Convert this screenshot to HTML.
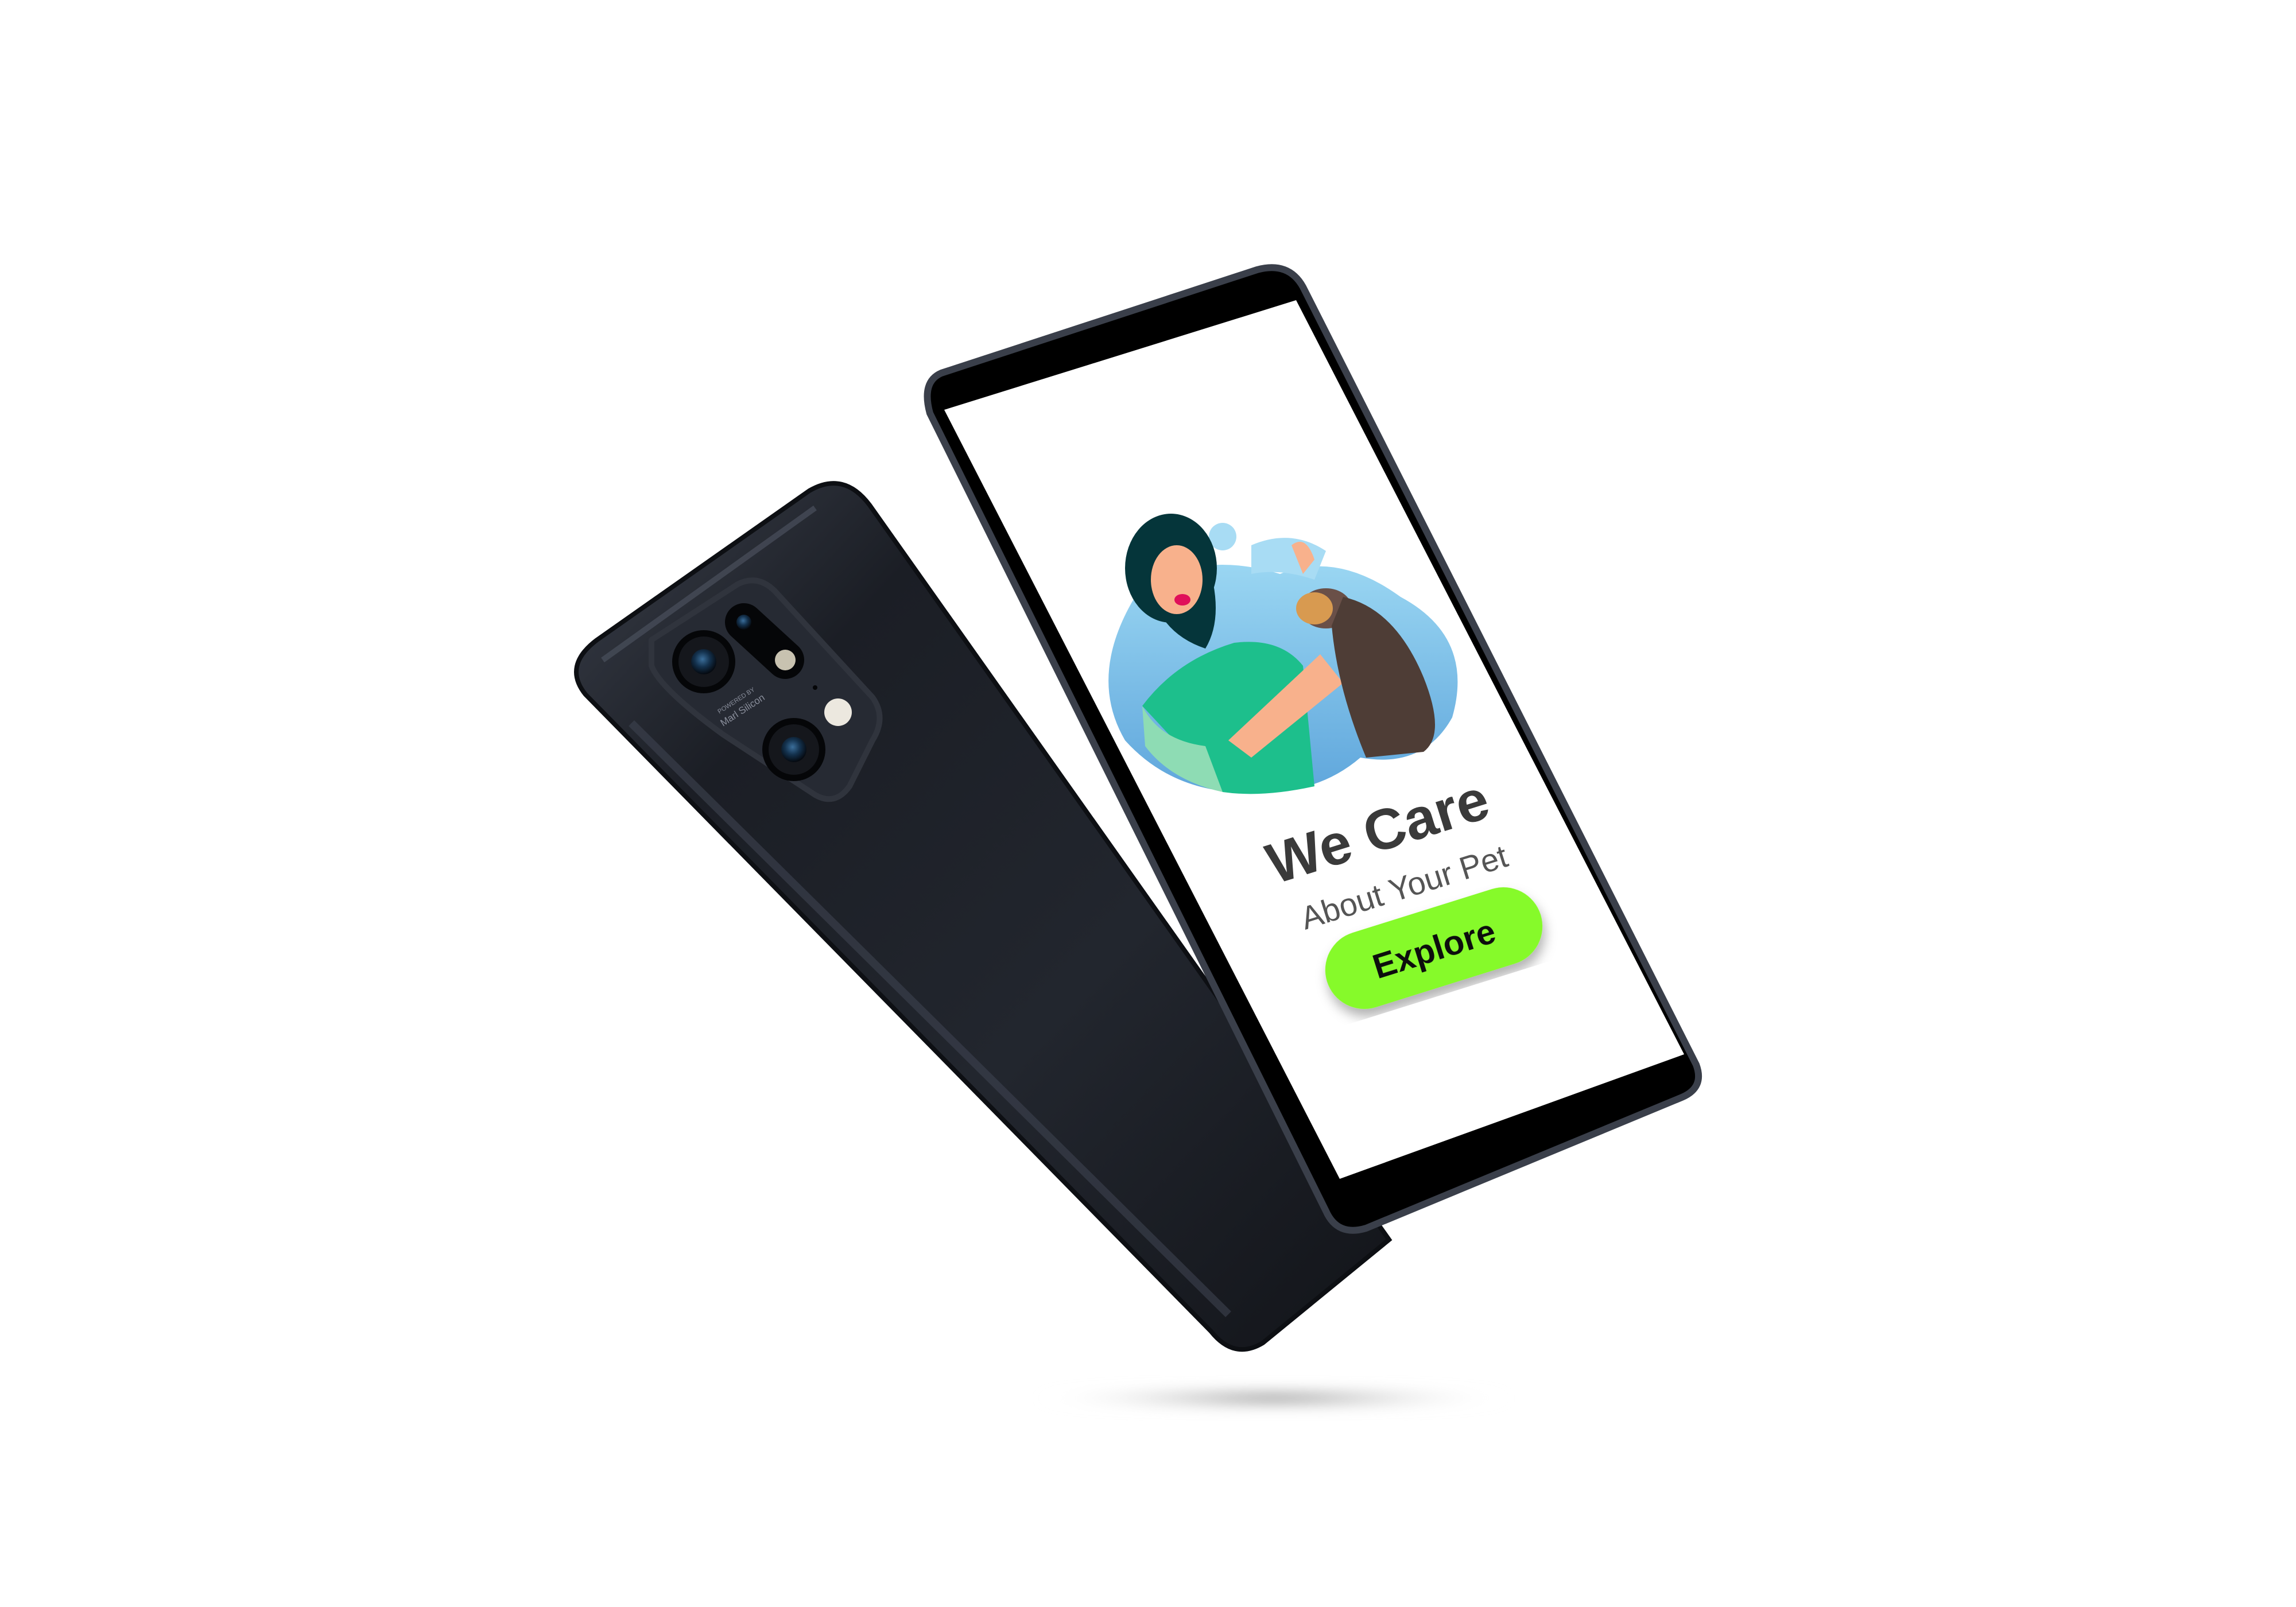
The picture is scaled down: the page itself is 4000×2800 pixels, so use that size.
<!DOCTYPE html>
<html><head><meta charset="utf-8"><style>
html,body{margin:0;padding:0;background:#fff;width:4000px;height:2800px;overflow:hidden}
svg{display:block}
</style></head><body>
<svg width="4000" height="2800" viewBox="0 0 4000 2800" xmlns="http://www.w3.org/2000/svg">
<defs>
<linearGradient id="bk" x1="0" y1="0" x2="1" y2="1">
<stop offset="0" stop-color="#3a3f4a"/><stop offset="0.25" stop-color="#1b1e25"/><stop offset="0.6" stop-color="#22262e"/><stop offset="1" stop-color="#121419"/></linearGradient>
<radialGradient id="sh" cx="0.5" cy="0.5" r="0.5"><stop offset="0" stop-color="#666" stop-opacity="0.9"/><stop offset="1" stop-color="#fff" stop-opacity="0"/></radialGradient>
<linearGradient id="blob" x1="0" y1="0" x2="0" y2="1"><stop offset="0" stop-color="#9ad6f2"/><stop offset="1" stop-color="#5fa6dc"/></linearGradient>
<radialGradient id="lens" cx="0.45" cy="0.4" r="0.6"><stop offset="0" stop-color="#3b6e9a"/><stop offset="0.5" stop-color="#14324e"/><stop offset="1" stop-color="#05090f"/></radialGradient>
<filter id="bl" x="-50%" y="-50%" width="200%" height="200%"><feGaussianBlur stdDeviation="12"/></filter>
<filter id="bs"><feDropShadow dx="0" dy="14" stdDeviation="10" flood-color="#000" flood-opacity="0.3"/></filter>
</defs>
<ellipse cx="2219" cy="2436" rx="420" ry="20" fill="url(#sh)" filter="url(#bl)"/>
<!-- back phone -->
<path d="M1040,1115 L1410,855 Q1470,820 1515,880 L2420,2160 L2200,2340 Q2150,2370 2110,2320 L1020,1210 Q980,1160 1040,1115 Z" fill="url(#bk)" stroke="#0d0f13" stroke-width="8"/>
<path d="M1050,1150 L1420,885" stroke="#4a505c" stroke-width="10" fill="none" opacity="0.7"/>
<path d="M1100,1260 L2140,2290" stroke="#3d4350" stroke-width="14" fill="none" opacity="0.6"/>
<!-- camera module -->
<path d="M1135,1115 L1285,1018 Q1320,1000 1350,1030 L1520,1215 Q1545,1250 1520,1290 L1480,1370 Q1455,1405 1420,1385 L1260,1280 Q1150,1200 1135,1160 Z" fill="#262a33" stroke="#30343d" stroke-width="10" stroke-linejoin="round"/>
<circle cx="1226" cy="1153" r="55" fill="#050608"/><circle cx="1226" cy="1153" r="44" fill="#15171c"/><circle cx="1226" cy="1153" r="22" fill="url(#lens)"/>
<circle cx="1383" cy="1306" r="55" fill="#050608"/><circle cx="1383" cy="1306" r="44" fill="#15171c"/><circle cx="1383" cy="1306" r="22" fill="url(#lens)"/>
<line x1="1296" y1="1084" x2="1368" y2="1150" stroke="#050608" stroke-width="66" stroke-linecap="round"/>
<circle cx="1296" cy="1084" r="13" fill="url(#lens)"/>
<circle cx="1368" cy="1150" r="18" fill="#c8c2b0"/>
<circle cx="1420" cy="1198" r="4" fill="#050608"/>
<circle cx="1460" cy="1241" r="24" fill="#ece8df"/>
<g transform="translate(1290,1232) rotate(-33)" font-family="Liberation Sans, sans-serif" fill="#8a8f9c">
<text x="0" y="-10" font-size="11" text-anchor="middle">POWERED BY</text>
<text x="0" y="12" font-size="17" text-anchor="middle">Marl Silicon</text>
</g>
<!-- front phone -->
<path d="M1640,650 L2190,470 Q2245,455 2270,500 L2955,1855 Q2970,1895 2930,1912 L2380,2140 Q2330,2155 2310,2110 L1620,720 Q1605,665 1640,650 Z" fill="#000" stroke="#3a3f4a" stroke-width="12"/>
<path d="M1645,714 L2258,523 L2934,1837 L2334,2054 Z" fill="#fff"/>
<!-- illustration -->
<path d="M1990,1020 Q2100,960 2230,1000 Q2330,960 2440,1040 Q2570,1110 2530,1250 Q2480,1340 2370,1320 Q2300,1380 2200,1380 Q2050,1390 1960,1290 Q1890,1170 1990,1020 Z" fill="url(#blob)"/>
<path d="M2180,950 Q2250,920 2310,960 L2290,1010 Q2230,990 2180,1000 Z" fill="#a8dcf4"/>
<circle cx="2130" cy="935" r="24" fill="#a8dcf4"/><circle cx="2095" cy="968" r="11" fill="#a8dcf4"/>
<path d="M1990,1230 Q2050,1150 2150,1120 Q2230,1110 2270,1160 L2290,1370 Q2200,1390 2130,1380 Z" fill="#1dbf8c"/>
<path d="M1990,1230 Q2020,1290 2100,1300 L2130,1380 Q2040,1360 1995,1300 Z" fill="#8edcb4"/>
<path d="M2140,1290 L2300,1140 L2340,1190 L2180,1320 Z" fill="#f8b18c"/>
<ellipse cx="2040" cy="990" rx="80" ry="95" fill="#05353a"/>
<path d="M2000,1000 Q2010,1100 2100,1130 Q2130,1080 2110,1000 Z" fill="#05353a"/>
<ellipse cx="2050" cy="1010" rx="45" ry="60" fill="#f8b18c"/>
<ellipse cx="2060" cy="1045" rx="14" ry="10" fill="#e0105a"/>
<ellipse cx="2310" cy="1060" rx="45" ry="35" fill="#6a5048"/>
<ellipse cx="2290" cy="1060" rx="32" ry="28" fill="#d89a50"/>
<path d="M2340,1040 Q2430,1060 2480,1180 Q2520,1280 2480,1310 L2380,1320 Q2330,1200 2320,1090 Z" fill="#4e3d36"/>
<path d="M2250,950 Q2275,930 2290,975 L2270,1000 Z" fill="#f8b18c"/>
<!-- text -->
<g transform="translate(2400,1448) rotate(-17.4)">
<text x="0" y="35" text-anchor="middle" font-family="Liberation Sans, sans-serif" font-weight="bold" font-size="100" fill="#3a3a3a">We Care</text>
</g>
<g transform="translate(2446,1545) rotate(-17.4)">
<text x="0" y="20" text-anchor="middle" font-family="Liberation Sans, sans-serif" font-size="56" fill="#555">About Your Pet</text>
</g>
<g transform="translate(2498,1652) rotate(-17.4)" filter="url(#bs)">
<rect x="-195" y="-68" width="390" height="136" rx="68" fill="#86fa2a"/>
<text x="0" y="22" text-anchor="middle" font-family="Liberation Sans, sans-serif" font-weight="bold" font-size="60" fill="#111">Explore</text>
</g>
</svg>
</body></html>
